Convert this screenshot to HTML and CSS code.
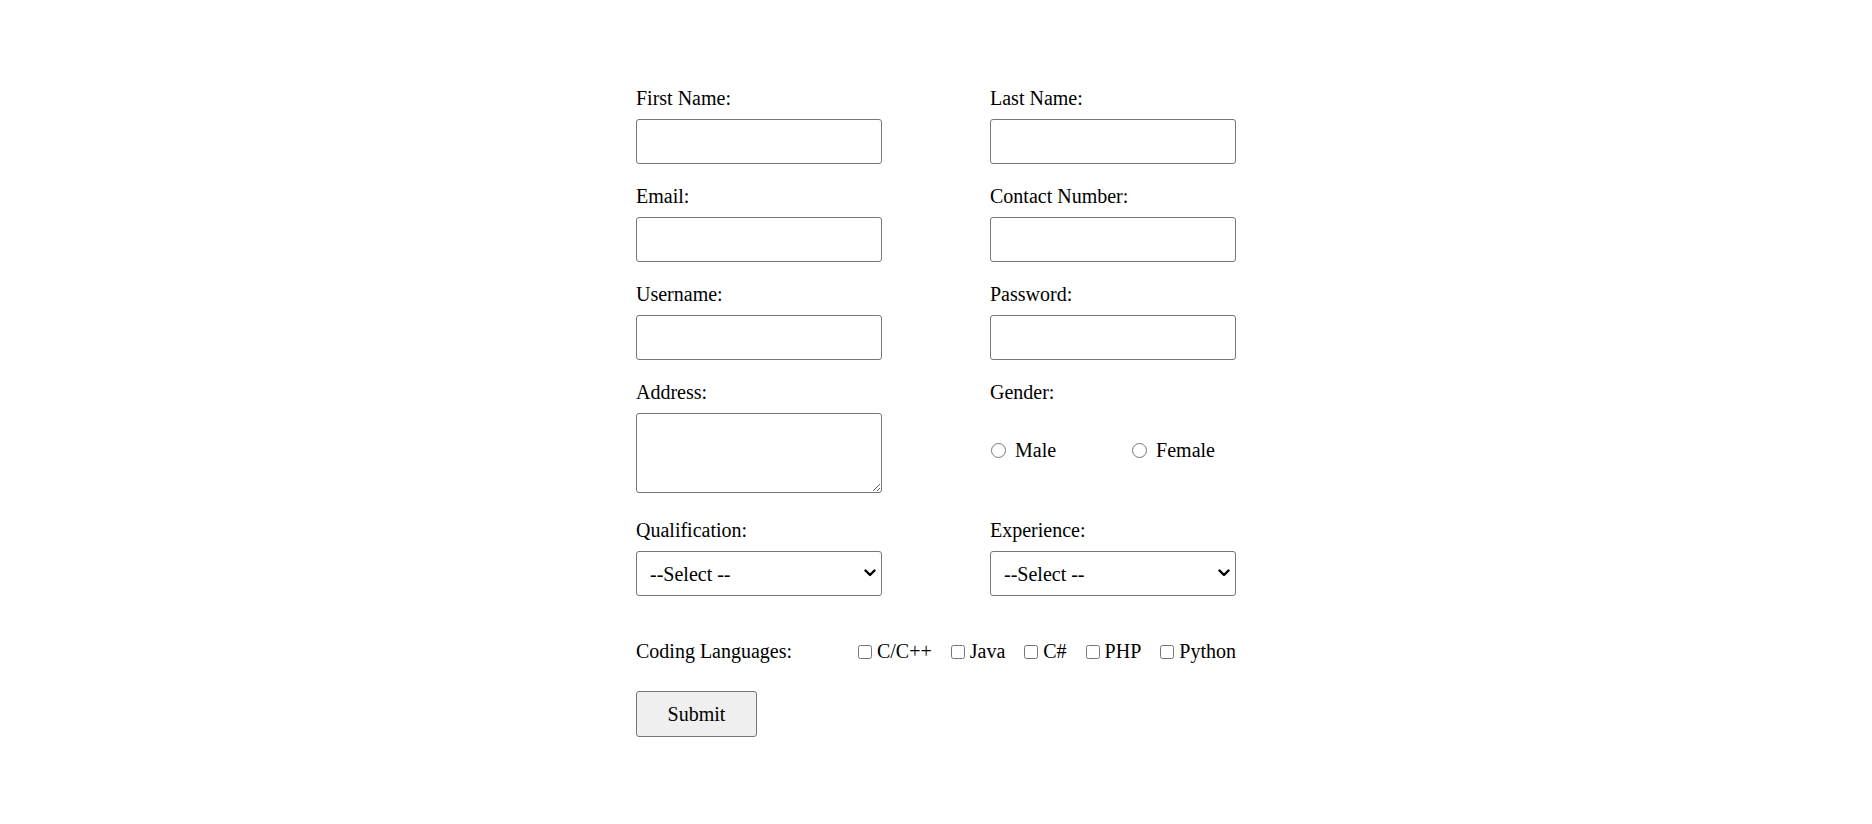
FILE: index.html
```html
<!DOCTYPE html>
<html lang="en">
<head>
<meta charset="utf-8">
<title>Registration Form</title>
<link rel="stylesheet" href="styles.css">
</head>
<body>
<form class="form">
  <div class="grid">
    <div class="field">
      <label class="lbl" for="fn">First Name:</label>
      <input class="txt" type="text" id="fn">
    </div>
    <div class="field">
      <label class="lbl" for="ln">Last Name:</label>
      <input class="txt" type="text" id="ln">
    </div>
    <div class="field">
      <label class="lbl" for="em">Email:</label>
      <input class="txt" type="email" id="em">
    </div>
    <div class="field">
      <label class="lbl" for="cn">Contact Number:</label>
      <input class="txt" type="text" id="cn">
    </div>
    <div class="field">
      <label class="lbl" for="un">Username:</label>
      <input class="txt" type="text" id="un">
    </div>
    <div class="field">
      <label class="lbl" for="pw">Password:</label>
      <input class="txt" type="password" id="pw">
    </div>
    <div class="field">
      <label class="lbl" for="ad">Address:</label>
      <textarea class="area" id="ad"></textarea>
    </div>
    <div class="field">
      <span class="lbl">Gender:</span>
      <div class="radios">
        <label class="opt"><input class="radio" type="radio" name="g"><span>Male</span></label>
        <label class="opt"><input class="radio" type="radio" name="g"><span>Female</span></label>
      </div>
    </div>
    <div class="field">
      <label class="lbl" for="q">Qualification:</label>
      <div class="sel-wrap">
        <select class="sel" id="q"><option>--Select --</option></select>
        <svg class="chev" width="12" height="8" viewBox="0 0 12 8" aria-hidden="true"><path d="M1.5 1.5 L6 6 L10.5 1.5" fill="none" stroke="#000" stroke-width="2.4" stroke-linecap="round" stroke-linejoin="round"/></svg>
      </div>
    </div>
    <div class="field">
      <label class="lbl" for="x">Experience:</label>
      <div class="sel-wrap">
        <select class="sel" id="x"><option>--Select --</option></select>
        <svg class="chev" width="12" height="8" viewBox="0 0 12 8" aria-hidden="true"><path d="M1.5 1.5 L6 6 L10.5 1.5" fill="none" stroke="#000" stroke-width="2.4" stroke-linecap="round" stroke-linejoin="round"/></svg>
      </div>
    </div>
  </div>
  <div class="langs">
    <span class="langs-lbl">Coding Languages:</span>
    <div class="checks">
      <label class="chk"><input class="box" type="checkbox"><span>C/C++</span></label>
      <label class="chk"><input class="box" type="checkbox"><span>Java</span></label>
      <label class="chk"><input class="box" type="checkbox"><span>C#</span></label>
      <label class="chk"><input class="box" type="checkbox"><span>PHP</span></label>
      <label class="chk"><input class="box" type="checkbox"><span>Python</span></label>
    </div>
  </div>
  <button class="submit" type="submit">Submit</button>
</form>
</body>
</html>
```

FILE: styles.css
```css
html, body {
  margin: 0;
  padding: 0;
  background: #ffffff;
}

body {
  font-family: "Liberation Serif", "Times New Roman", serif;
  font-size: 20px;
  color: #000000;
}

.form {
  width: 600px;
  margin: 0 auto;
  padding-top: 87px;
  display: flex;
  flex-direction: column;
  align-items: flex-start;
}

.grid {
  width: 100%;
  display: grid;
  grid-template-columns: 246px 246px;
  justify-content: space-between;
  row-gap: 21px;
}

.field {
  display: flex;
  flex-direction: column;
}

.lbl {
  display: block;
  line-height: 23px;
  margin-bottom: 9px;
}

.txt,
.area,
.sel {
  box-sizing: border-box;
  width: 246px;
  margin: 0;
  border: 1px solid #767676;
  border-radius: 3px;
  background: #ffffff;
  font-family: "Liberation Serif", "Times New Roman", serif;
  font-size: 20px;
  color: #000000;
}

.txt {
  height: 45px;
  padding: 0 10px;
}

.area {
  display: block;
  height: 80px;
  padding: 4px;
  margin-bottom: 5px;
  resize: both;
}

.radios {
  display: flex;
  align-items: center;
  column-gap: 76px;
  height: 74px;
  padding-left: 1px;
}

.opt {
  display: inline-flex;
  align-items: center;
  line-height: 23px;
}

.radio {
  width: 15px;
  height: 15px;
  margin: 0 9px 0 0;
}

.sel-wrap {
  position: relative;
  width: 246px;
  height: 45px;
}

.sel {
  display: block;
  height: 45px;
  padding: 0 30px 0 13px;
  -webkit-appearance: none;
  appearance: none;
}

.chev {
  position: absolute;
  right: 6px;
  top: 18px;
  pointer-events: none;
}

.langs {
  width: 100%;
  margin-top: 44px;
  display: flex;
  justify-content: space-between;
  align-items: center;
  line-height: 23px;
}

.checks {
  display: flex;
  align-items: center;
  column-gap: 19px;
}

.chk {
  display: inline-flex;
  align-items: center;
}

.box {
  width: 14px;
  height: 14px;
  margin: 0 5px 0 0;
}

.submit {
  margin-top: 28px;
  box-sizing: border-box;
  width: 121px;
  height: 46px;
  padding: 0;
  border: 1px solid #767676;
  border-radius: 3px;
  background: #efefef;
  font-family: "Liberation Serif", "Times New Roman", serif;
  font-size: 20px;
  color: #000000;
}
```
